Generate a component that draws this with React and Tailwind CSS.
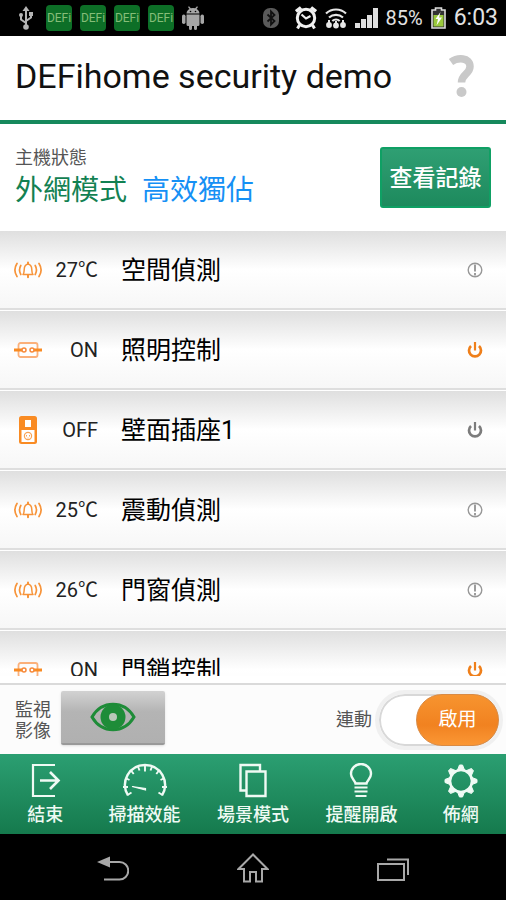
import React, { useState } from 'react';

const devices = [
  { id: 1, type: 'alarm', value: '27℃', name: '空間偵測', status: 'info' },
  { id: 2, type: 'relay', value: 'ON', name: '照明控制', status: 'on' },
  { id: 3, type: 'socket', value: 'OFF', name: '壁面插座1', status: 'off' },
  { id: 4, type: 'alarm', value: '25℃', name: '震動偵測', status: 'info' },
  { id: 5, type: 'alarm', value: '26℃', name: '門窗偵測', status: 'info' },
  { id: 6, type: 'relay', value: 'ON', name: '門鎖控制', status: 'on' },
];

function UsbIcon() {
  return (
    <svg className="w-4 h-6" viewBox="0 0 16 24" fill="none" stroke="#b4b4b4" strokeWidth="2">
      <path d="M8 4v16M8 17l-5-3.5V9M8 15l5-3.5V8" />
      <path d="M8 0l3.500 5h-7z" fill="#b4b4b4" stroke="none" />
      <circle cx="8" cy="21" r="2.8" fill="#b4b4b4" stroke="none" />
      <circle cx="3" cy="9" r="2" fill="#b4b4b4" stroke="none" />
      <path d="M11 6h4v4h-4z" fill="#b4b4b4" stroke="none" />
    </svg>
  );
}

function AndroidIcon() {
  return (
    <svg className="w-[22px] h-6" viewBox="0 0 22 24" fill="#a6a6a6">
      <path d="M4.500 7.500C4.500 5 6.500 3.500 7.500 3L6 1l1-.8L8.800 2.300a7 7 0 0 1 4.400 0L15 .2l1 .8L14.500 3c1 .5 3 2 3 4.500z" />
      <path d="M4.500 8.500h13v10a1.500 1.500 0 0 1-1.500 1.500h-1v2.500a1.500 1.500 0 0 1-3 0V20h-2v2.500a1.500 1.500 0 0 1-3 0V20H6a1.500 1.500 0 0 1-1.500-1.500z" />
      <rect x="0" y="8.500" width="3.500" height="9.500" rx="1.700" />
      <rect x="18.500" y="8.500" width="3.500" height="9.500" rx="1.700" />
      <circle cx="8.500" cy="5.500" r=".8" fill="#000" />
      <circle cx="13.500" cy="5.500" r=".8" fill="#000" />
    </svg>
  );
}

function BluetoothIcon() {
  return (
    <svg className="w-4 h-[22px]" viewBox="0 0 16 22">
      <rect x="0" y="1" width="16" height="20" rx="7" fill="#5a5a5a" />
      <path d="M4.500 7.500l7 6.500L8 17.500v-13L11.500 8l-7 6.500" fill="none" stroke="#111" strokeWidth="1.800" />
    </svg>
  );
}

function AlarmClockIcon() {
  return (
    <svg className="w-[22px] h-6" viewBox="0 0 22 24" fill="none" stroke="#f0f0f0" strokeWidth="3">
      <circle cx="11" cy="12" r="8.700" />
      <path d="M1 5.500L6 1.500M21 5.500L16 1.500" strokeWidth="3.500" />
      <path d="M4.500 19L2.500 22.500M17.500 19l2 3.500" strokeWidth="3" />
      <path d="M6.500 8.500L11 12.500l4.500-2.500" strokeWidth="2.200" />
    </svg>
  );
}

function WifiIcon() {
  return (
    <svg className="w-[22px] h-[22px]" viewBox="0 0 22 22" fill="none" stroke="#e6e6e6" strokeWidth="2.200">
      <path d="M1 6.500a14.500 14.500 0 0 1 20 0M4 10.500a10.500 10.500 0 0 1 14 0M7.300 14a5.500 5.500 0 0 1 7.400 0" />
      <path d="M4 13v5M11 14v5M18 13v5" strokeWidth="2" />
      <circle cx="4" cy="18" r="2.900" fill="#e6e6e6" stroke="none" />
      <circle cx="11" cy="18.500" r="2.900" fill="#e6e6e6" stroke="none" />
      <circle cx="18" cy="18" r="2.900" fill="#e6e6e6" stroke="none" />
    </svg>
  );
}

function SignalIcon() {
  return (
    <svg className="w-[23px] h-5" viewBox="0 0 23 20" fill="#dedede">
      <path d="M0 15h5v5H0zM6 11h5v9H6zM12 7h5v13h-5zM18 0h5v20h-5z" />
    </svg>
  );
}

function BatteryIcon() {
  return (
    <svg className="w-[15px] h-[22px]" viewBox="0 0 15 22">
      <path d="M4.500 1h6v2h3.500v18H1V3h3.500z" fill="#333" stroke="#ddd" strokeWidth="1.600" />
      <path d="M2.500 8h10v11.500h-10z" fill="#9aca3c" />
      <path d="M9.500 5L4.500 12h2.500L5.500 18.500 11 10.500H8z" fill="#fff" />
    </svg>
  );
}

function StatusBar() {
  return (
    <div className="h-9 shrink-0 bg-black flex items-center justify-between pl-[18px] pr-2 text-[#e2e2e2]">
      <div className="flex items-center gap-2">
        <UsbIcon />
        <div className="flex items-center gap-2 pl-1">
          {[1, 2, 3, 4].map(n => (
            <span
              key={n}
              className="w-[26px] h-[26px] rounded-[4px] bg-[#0d6f27] text-[#85bd78] text-[12px] leading-[26px] text-center"
            >
              DEFi
            </span>
          ))}
        </div>
        <span><AndroidIcon /></span>
      </div>
      <div className="flex items-center gap-2">
        <span className="pr-2"><BluetoothIcon /></span>
        <AlarmClockIcon />
        <WifiIcon />
        <SignalIcon />
        <span className="text-[20px] leading-6">85%</span>
        <BatteryIcon />
        <span className="text-[23px] leading-6">6:03</span>
      </div>
    </div>
  );
}

function AlarmBellIcon() {
  return (
    <svg className="w-7 h-5" viewBox="0 0 28 20" fill="none" stroke="#f7943a" strokeWidth="1.700" strokeLinecap="round">
      <path d="M9 14.500c1.200-1.200 1.100-3 1.200-5 .1-2.600 1.600-5 3.800-5.400 2.200.4 3.700 2.800 3.800 5.400.1 2 0 3.800 1.200 5z" strokeLinejoin="round" strokeWidth="1.500" />
      <path d="M14 4V2.500M14 15v2.200" strokeWidth="2" />
      <path d="M6.800 5.500c-1.600 2.800-1.600 6.200 0 9M21.200 5.500c1.600 2.800 1.600 6.200 0 9" />
      <path d="M3 3.500c-2.600 4-2.600 9 0 13M25 3.500c2.600 4 2.600 9 0 13" />
    </svg>
  );
}

function RelayIcon() {
  return (
    <svg className="w-7 h-5" viewBox="0 0 28 20" fill="none" stroke="#f7893a">
      <rect x="4.500" y="3" width="19" height="14" rx="2" stroke="#fbb07a" strokeWidth="1.800" />
      <path d="M0 10h8M20 10h8" stroke="#f98b23" strokeWidth="2.800" />
      <circle cx="10" cy="10" r="2" strokeWidth="1.500" />
      <circle cx="18" cy="10" r="2" strokeWidth="1.500" />
    </svg>
  );
}

function SocketIcon() {
  return (
    <svg className="w-7 h-[30px]" viewBox="0 0 28 30">
      <rect x="5" y="1" width="18" height="28" rx="2.500" fill="#f98b23" />
      <rect x="11" y="5" width="6" height="7" fill="#fff" />
      <rect x="7.500" y="15" width="13" height="12" fill="#fff" />
      <circle cx="14" cy="21" r="3.600" fill="none" stroke="#f9a355" strokeWidth="1.200" />
      <path d="M12.500 20v1.500M15.500 20v1.500M14 22.500v1" stroke="#f9a355" strokeWidth="1" />
    </svg>
  );
}

function DeviceIcon({ type }) {
  if (type === 'relay') return <RelayIcon />;
  if (type === 'socket') return <SocketIcon />;
  return <AlarmBellIcon />;
}

function StateIcon({ status }) {
  if (status === 'info') {
    return (
      <svg className="w-4 h-4" viewBox="0 0 16 16" fill="none" stroke="#989898">
        <circle cx="8" cy="8" r="6.800" strokeWidth="1.400" />
        <path d="M8 2.500v7M8 11v2.500" strokeWidth="1.900" />
      </svg>
    );
  }
  return (
    <svg className="w-4 h-4" viewBox="0 0 16 16" fill="none" stroke={status === 'on' ? '#ef7f1a' : '#7c7c7c'} strokeWidth="2.700">
      <path d="M4 4a6 6 0 1 0 8 0" />
      <path d="M8 0v8.500" strokeWidth="2.200" />
    </svg>
  );
}

function DeviceRow({ device }) {
  return (
    <li className="h-20 flex items-center pl-[14px] pr-[23px] border-t border-t-white border-b-2 border-b-[#dedede] bg-linear-to-b from-[#dfdfdf] via-white via-50% to-[#f7f7f7]">
      <DeviceIcon type={device.type} />
      <span className="w-14 text-right text-[20px] text-[#222]">{device.value}</span>
      <span className="flex-1 pt-0.5 pl-[23px] text-[25px] text-black">{device.name}</span>
      <button type="button" aria-label={device.name}>
        <StateIcon status={device.status} />
      </button>
    </li>
  );
}

function ExitIcon() {
  return (
    <svg className="w-9 h-9" viewBox="0 0 36 36" fill="none" stroke="currentColor" strokeWidth="2.200">
      <path d="M28 2H6v31h22" />
      <path d="M13 17.500h18M23 9l8.500 8.500L23 26" strokeWidth="2.600" />
    </svg>
  );
}

function GaugeIcon() {
  return (
    <svg className="w-12 h-9" viewBox="0 0 48 36" fill="none" stroke="currentColor" strokeWidth="2.400">
      <path d="M7 32.500C-1 19 8 2 24 2s25 17 17 30.500" />
      <path d="M6.500 32l4-2.500M41.500 32l-4-2.500M2 24h5M46 24h-5M4.500 15l4 2M43.500 15l-4 2M10 7.500l2.700 3.500M38 7.500L35.300 11M17 3.500l1.500 4M31 3.500l-1.500 4M24 2v6.500" strokeWidth="1.900" />
      <path d="M11 23.500l13.500 2v1.500z" strokeWidth="1.200" fill="currentColor" />
    </svg>
  );
}

function SceneIcon() {
  return (
    <svg className="w-9 h-9" viewBox="0 0 36 36" fill="none" stroke="currentColor" strokeWidth="2.400">
      <path d="M11 27.500H5.500V2H25v6" />
      <path d="M11.500 8.500h19V33h-19z" />
    </svg>
  );
}

function BulbIcon() {
  return (
    <svg className="w-9 h-9" viewBox="0 0 36 36" fill="none" stroke="currentColor" strokeWidth="2.400">
      <path d="M12.500 20.500C12 17.500 8 15.500 8 11a10 10 0 0 1 20 0c0 4.500-4 6.500-4.500 9.500z" />
      <path d="M11.500 24.500h13M11.500 28.500h13M12.500 33h11" strokeWidth="2.200" />
    </svg>
  );
}

function GearIcon() {
  const angles = [0, 45, 90, 135, 180, 225, 270, 315];
  return (
    <svg className="w-9 h-9" viewBox="0 0 36 36" fill="none" stroke="currentColor">
      <circle cx="18" cy="18" r="11" strokeWidth="2.600" />
      {angles.map(a => (
        <path key={a} d="M14.500 7L16.500 2h3L21.500 7z" fill="currentColor" strokeWidth="1" transform={`rotate(${a} 18 18)`} />
      ))}
    </svg>
  );
}

const menu = [
  { label: '結束', Icon: ExitIcon },
  { label: '掃描效能', Icon: GaugeIcon },
  { label: '場景模式', Icon: SceneIcon },
  { label: '提醒開啟', Icon: BulbIcon },
  { label: '佈網', Icon: GearIcon },
];

function SystemNav() {
  return (
    <div className="h-[66px] shrink-0 bg-black flex items-center justify-center gap-[108px] pt-1 text-[#a8a8a8]">
      <button type="button" aria-label="Back">
        <svg className="w-8 h-8" viewBox="0 0 32 32" fill="none" stroke="currentColor" strokeWidth="2">
          <path d="M10 9h12.500a8 8 0 0 1 0 17.500H7" />
          <path d="M0 9l13-5.500v11z" fill="currentColor" stroke="none" />
        </svg>
      </button>
      <button type="button" aria-label="Home">
        <svg className="w-8 h-8" viewBox="0 0 32 32" fill="none" stroke="currentColor" strokeWidth="2">
          <path d="M16 1.500L1.500 16H7v12.500h6V19h6v9.500h6V16h5.500z" />
        </svg>
      </button>
      <button type="button" aria-label="Recent">
        <svg className="w-8 h-8" viewBox="0 0 32 32" fill="none" stroke="currentColor" strokeWidth="2">
          <path d="M1 11h26v16H1z" />
          <path d="M10 6.500h21V22" />
        </svg>
      </button>
    </div>
  );
}

export default function App() {
  const [linked, setLinked] = useState(true);

  return (
    <div className="h-screen flex flex-col overflow-hidden bg-white font-['Roboto','Noto_Sans_CJK_TC',sans-serif]">
      <StatusBar />

      {/* Title */}
      <header className="h-[88px] shrink-0 flex items-center justify-between pl-[15px] pr-[30px] pb-1 border-b-4 border-[#16895c]">
        <h1 className="text-[34px] leading-10 text-[#111]">DEFihome security demo</h1>
        <button type="button" aria-label="Help">
          <svg className="w-7 h-11" viewBox="0 0 28 44" fill="none" stroke="#c9c9c9">
            <path d="M3 8C9.500 3.500 22 3 22 12.500c0 7.500-8.500 7.500-8.500 16" strokeWidth="7.500" />
            <circle cx="13.500" cy="38" r="5" fill="#c9c9c9" stroke="none" />
          </svg>
        </button>
      </header>

      {/* Host status */}
      <section className="h-[106px] shrink-0 flex items-center justify-between px-[15px]">
        <div className="pt-1">
          <p className="text-[18px] leading-6 text-[#555]">主機狀態</p>
          <p className="flex gap-[15px] text-[28px] leading-[42px]">
            <span className="text-[#128152]">外網模式</span>
            <span className="text-[#1590f5]">高效獨佔</span>
          </p>
        </div>
        <button
          type="button"
          className="w-[111px] h-[61px] pt-1 rounded-[3px] border-2 border-[#0fa064] bg-linear-to-b from-[#2f9f73] to-[#1d8a5d] text-[23px] font-medium text-white whitespace-nowrap"
        >
          查看記錄
        </button>
      </section>

      {/* Device list */}
      <ul className="flex-1 min-h-0 overflow-hidden">
        {devices.map(device => (
          <DeviceRow key={device.id} device={device} />
        ))}
      </ul>

      {/* Camera and linkage */}
      <div className="shrink-0 pt-[7px] bg-white">
        <div className="h-[71px] flex items-center justify-between pl-[15px] pr-[3px] border-t-2 border-[#dadada] bg-[#fcfcfc] text-[18px] text-[#555]">
          <div className="flex items-center gap-[10px]">
            <span id="camera" className="w-9 leading-[21px]">監視影像</span>
            <button
              type="button"
              aria-labelledby="camera"
              className="w-[104px] h-[54px] mb-1 flex items-center justify-center rounded-[2px] border-b-2 border-[#999] bg-linear-to-b from-[#d2d2d2] via-[#b4b4b4] via-40% to-[#b0b0b0] shadow-sm"
            >
              <svg className="w-[46px] h-8" viewBox="0 0 46 32">
                <path d="M2 16C12-1 34-1 44 16 34 33 12 33 2 16z" fill="none" stroke="#1e8c38" strokeWidth="3" />
                <circle cx="23" cy="16" r="12.500" fill="#1e8c38" />
                <circle cx="23" cy="16" r="4" fill="#b8c8b8" />
              </svg>
            </button>
          </div>
          <label className="flex items-center gap-[3px] cursor-pointer">
            <span>連動</span>
            <input
              type="checkbox"
              className="sr-only"
              checked={linked}
              onChange={e => setLinked(e.target.checked)}
            />
            <span className={`w-[128px] h-[60px] flex rounded-full border-4 border-[#f0f0f0] bg-white inset-ring-2 inset-ring-[#d8d8d8] ${linked ? 'justify-end' : 'justify-start'}`}>
              <span className="w-[83px] h-[52px] pt-0.5 flex items-center justify-center rounded-full border border-[#d98a43] bg-linear-to-b from-[#f7942f] via-[#f18220] via-60% to-[#fb9734] text-[19px] text-white">
                啟用
              </span>
            </span>
          </label>
        </div>
      </div>

      {/* Menu */}
      <nav className="h-20 shrink-0 grid grid-cols-[5fr_6fr_6fr_6fr_5fr] bg-linear-to-b from-[#2b9f72] to-[#157a4d] text-[#effaf4]">
        {menu.map(({ label, Icon }) => (
          <button key={label} type="button" className="flex flex-col items-center pt-[9px]">
            <Icon />
            <span className="text-[18px] leading-8 font-medium">{label}</span>
          </button>
        ))}
      </nav>

      <SystemNav />
    </div>
  );
}
